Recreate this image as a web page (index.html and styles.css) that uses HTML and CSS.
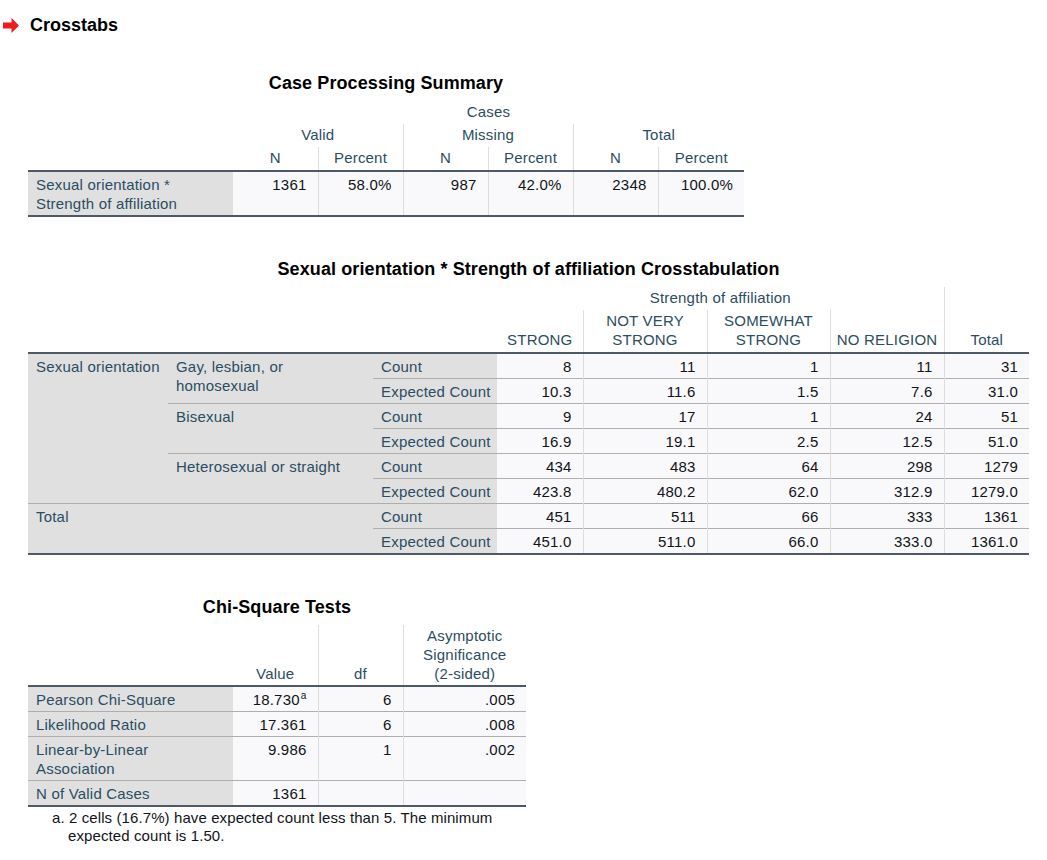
FILE: index.html
```html
<!DOCTYPE html>
<html lang="en">
<head>
<meta charset="utf-8">
<title>Crosstabs</title>
<link rel="stylesheet" href="styles.css">
</head>
<body>
<div class="page">
  <div class="heading">
    <svg class="arrow" width="16" height="15" viewBox="0 0 16 15" aria-hidden="true">
      <path d="M0 4.5 H8.5 V0 L16 7.5 L8.5 15 V10.5 H0 Z" fill="#ee1c1c"/>
    </svg>
    <span>Crosstabs</span>
  </div>

  <section class="output">
    <div class="title">Case Processing Summary</div>
    <table class="pivot cps">
      <colgroup>
        <col class="w-label"><col class="w85"><col class="w85"><col class="w85"><col class="w85"><col class="w85"><col class="w86">
      </colgroup>
      <thead>
        <tr><th rowspan="3"></th><th colspan="6">Cases</th></tr>
        <tr><th colspan="2">Valid</th><th colspan="2" class="sep">Missing</th><th colspan="2" class="sep">Total</th></tr>
        <tr><th>N</th><th class="sep">Percent</th><th class="sep">N</th><th class="sep">Percent</th><th class="sep">N</th><th class="sep">Percent</th></tr>
      </thead>
      <tbody>
        <tr>
          <td class="lab">Sexual orientation *<br>Strength of affiliation</td>
          <td class="num">1361</td><td class="num vs">58.0%</td><td class="num vs">987</td><td class="num vs">42.0%</td><td class="num vs">2348</td><td class="num vs">100.0%</td>
        </tr>
      </tbody>
    </table>
  </section>

  <section class="output">
    <div class="title">Sexual orientation * Strength of affiliation Crosstabulation</div>
    <table class="pivot xt">
      <colgroup>
        <col class="w140"><col class="w-label"><col class="w124"><col class="w86"><col class="w124"><col class="w123"><col class="w114"><col class="w85">
      </colgroup>
      <thead>
        <tr><th colspan="3" rowspan="2"></th><th colspan="4">Strength of affiliation</th><th rowspan="2" class="sep">Total</th></tr>
        <tr><th>STRONG</th><th class="sep">NOT VERY<br>STRONG</th><th class="sep">SOMEWHAT<br>STRONG</th><th class="sep">NO RELIGION</th></tr>
      </thead>
      <tbody>
        <tr>
          <td class="lab" rowspan="6">Sexual orientation</td>
          <td class="lab" rowspan="2">Gay, lesbian, or<br>homosexual</td>
          <td class="lab">Count</td>
          <td class="num">8</td><td class="num vs">11</td><td class="num vs">1</td><td class="num vs">11</td><td class="num vs">31</td>
        </tr>
        <tr class="rule">
          <td class="lab">Expected Count</td>
          <td class="num">10.3</td><td class="num vs">11.6</td><td class="num vs">1.5</td><td class="num vs">7.6</td><td class="num vs">31.0</td>
        </tr>
        <tr class="rule">
          <td class="lab" rowspan="2">Bisexual</td>
          <td class="lab">Count</td>
          <td class="num">9</td><td class="num vs">17</td><td class="num vs">1</td><td class="num vs">24</td><td class="num vs">51</td>
        </tr>
        <tr class="rule">
          <td class="lab">Expected Count</td>
          <td class="num">16.9</td><td class="num vs">19.1</td><td class="num vs">2.5</td><td class="num vs">12.5</td><td class="num vs">51.0</td>
        </tr>
        <tr class="rule">
          <td class="lab" rowspan="2">Heterosexual or straight</td>
          <td class="lab">Count</td>
          <td class="num">434</td><td class="num vs">483</td><td class="num vs">64</td><td class="num vs">298</td><td class="num vs">1279</td>
        </tr>
        <tr class="rule">
          <td class="lab">Expected Count</td>
          <td class="num">423.8</td><td class="num vs">480.2</td><td class="num vs">62.0</td><td class="num vs">312.9</td><td class="num vs">1279.0</td>
        </tr>
        <tr class="rule">
          <td class="lab" colspan="2" rowspan="2">Total</td>
          <td class="lab">Count</td>
          <td class="num">451</td><td class="num vs">511</td><td class="num vs">66</td><td class="num vs">333</td><td class="num vs">1361</td>
        </tr>
        <tr class="rule">
          <td class="lab">Expected Count</td>
          <td class="num">451.0</td><td class="num vs">511.0</td><td class="num vs">66.0</td><td class="num vs">333.0</td><td class="num vs">1361.0</td>
        </tr>
      </tbody>
    </table>
  </section>

  <section class="output">
    <div class="title">Chi-Square Tests</div>
    <table class="pivot chi">
      <colgroup>
        <col class="w-label"><col class="w85"><col class="w85"><col class="w123">
      </colgroup>
      <thead>
        <tr><th></th><th>Value</th><th class="sep">df</th><th class="sep">Asymptotic<br>Significance<br>(2-sided)</th></tr>
      </thead>
      <tbody>
        <tr>
          <td class="lab">Pearson Chi-Square</td>
          <td class="num">18.730<sup>a</sup></td><td class="num vs">6</td><td class="num vs">.005</td>
        </tr>
        <tr class="rule">
          <td class="lab">Likelihood Ratio</td>
          <td class="num">17.361</td><td class="num vs">6</td><td class="num vs">.008</td>
        </tr>
        <tr class="rule">
          <td class="lab">Linear-by-Linear<br>Association</td>
          <td class="num">9.986</td><td class="num vs">1</td><td class="num vs">.002</td>
        </tr>
        <tr class="rule">
          <td class="lab">N of Valid Cases</td>
          <td class="num">1361</td><td class="num vs"></td><td class="num vs"></td>
        </tr>
      </tbody>
    </table>
    <p class="foot">a. 2 cells (16.7%) have expected count less than 5. The minimum<br>expected count is 1.50.</p>
  </section>
</div>
</body>
</html>
```

FILE: styles.css
```css
* { box-sizing: border-box; }

body {
  margin: 0;
  background: #ffffff;
  color: #010205;
  font-family: "Liberation Sans", Arial, sans-serif;
  font-size: 15px;
}

.page {
  padding: 14px 0 40px;
}

.heading {
  display: flex;
  align-items: center;
  gap: 11px;
  height: 22px;
  padding-left: 3px;
  font-size: 18px;
  font-weight: bold;
  color: #000;
}

.arrow { display: block; }

.output {
  width: fit-content;
  margin: 36px 0 0 28px;
}

.output + .output { margin-top: 41px; }

.title {
  font-size: 18px;
  font-weight: bold;
  line-height: 22px;
  letter-spacing: 0.1px;
  text-align: center;
  color: #000;
  margin-bottom: 7px;
}

.pivot {
  border-collapse: collapse;
  table-layout: fixed;
  letter-spacing: 0.2px;
}

.cps { width: 716px; }
.xt { width: 1001px; }
.chi { width: 498px; }

.w-label { width: 205px; }
.w140 { width: 140px; }
.w124 { width: 124px; }
.w123 { width: 123px; }
.w114 { width: 114px; }
.w86 { width: 86px; }
.w85 { width: 85px; }

.pivot th {
  font-weight: normal;
  color: #2b4d62;
  text-align: center;
  vertical-align: bottom;
  line-height: 19px;
  padding: 1px 2px 3px;
  white-space: nowrap;
}

.chi th { padding-bottom: 2px; }

.pivot th.sep { border-left: 1px solid #dedede; }

.pivot tbody {
  border-top: 2px solid #4d5a66;
  border-bottom: 2px solid #4d5a66;
}

.pivot td {
  line-height: 19px;
  padding: 3px 11px 2px 8px;
  vertical-align: top;
  white-space: nowrap;
}

.pivot td.lab {
  background: #e0e0e0;
  color: #2b4d62;
  text-align: left;
}

.pivot td.num {
  background: #f9f9fb;
  color: #111418;
  text-align: right;
}

.pivot td.vs { border-left: 1px solid #dcdcdc; }

.pivot tr.rule td { border-top: 1px solid #aeaeae; }

.pivot sup {
  font-size: 10px;
  line-height: 0;
  vertical-align: 6px;
  margin-left: 1px;
}

.foot {
  margin: 2px 0 0;
  padding-left: 40px;
  text-indent: -16px;
  line-height: 18px;
  letter-spacing: 0.1px;
  color: #111418;
}
```
